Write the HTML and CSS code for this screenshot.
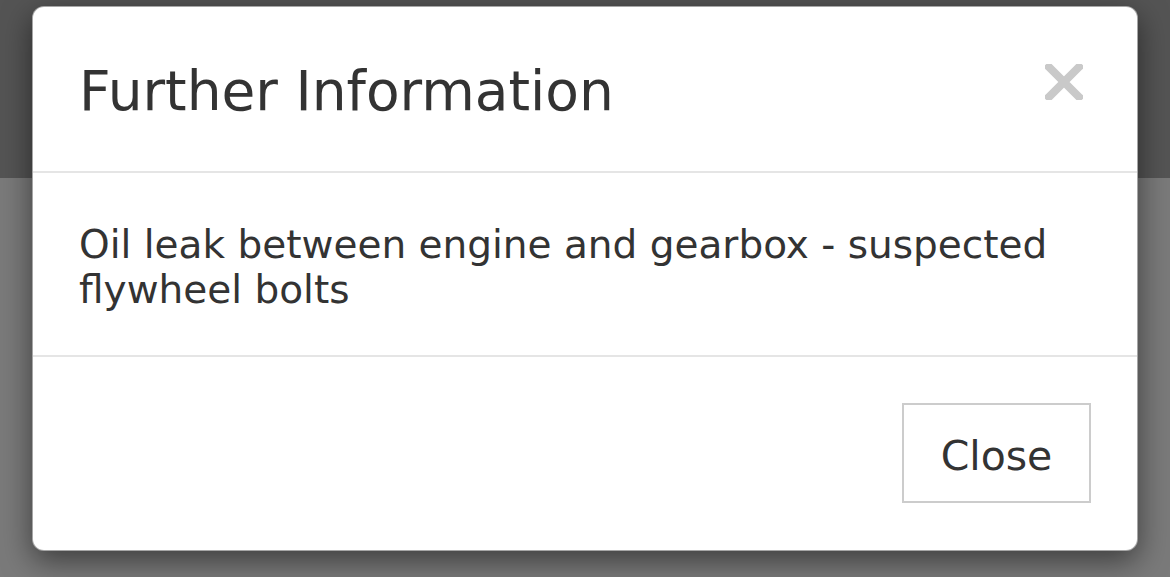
FILE: index.html
```html
<!DOCTYPE html>
<html>
<head>
<meta charset="utf-8">
<link rel="stylesheet" href="styles.css">
</head>
<body>
<div class="page">
  <div class="topbar"></div>
  <div class="rest"></div>
</div>
<div class="modal">
  <div class="modal-header">
    <h4 class="modal-title">Further Information</h4>
    <svg class="close-x" width="38" height="36" viewBox="0 0 38 36" aria-label="Close">
      <path d="M4 3 L34 33 M34 3 L4 33" stroke="#c9c9c9" stroke-width="8" stroke-linecap="square" fill="none"/>
    </svg>
  </div>
  <div class="modal-body">Oil leak between engine and gearbox - suspected flywheel bolts</div>
  <div class="modal-footer">
    <button class="btn">Close</button>
  </div>
</div>
</body>
</html>
```
FILE: styles.css
```css
html, body {
  margin: 0;
  padding: 0;
  height: 100%;
  overflow: hidden;
}
body {
  font-family: "DejaVu Sans", Verdana, sans-serif;
  color: #333;
  background: #7a7a7a;
}
.page {
  display: flex;
  flex-direction: column;
  height: 100%;
}
.topbar {
  height: 178px;
  background: #545454;
}
.rest {
  flex: 1;
  background: #7a7a7a;
}
.modal {
  position: absolute;
  left: 32px;
  top: 6px;
  width: 1104px;
  background: #fff;
  border: 1px solid rgba(0,0,0,0.35);
  border-radius: 12px;
  box-shadow: 0 10px 30px rgba(0,0,0,0.5);
  display: flex;
  flex-direction: column;
}
.modal-header {
  height: 166px;
  box-sizing: border-box;
  padding: 6px 54px 0 46px;
  display: flex;
  align-items: center;
  justify-content: space-between;
  border-bottom: 2px solid #e5e5e5;
}
.modal-title {
  margin: 0;
  font-size: 55px;
  font-weight: normal;
  line-height: 1.15;
}
.close-x {
  margin-bottom: 20px;
}
.modal-body {
  height: 184px;
  box-sizing: border-box;
  padding: 49px 46px 45px;
  font-size: 39px;
  line-height: 45px;
  border-bottom: 2px solid #e5e5e5;
}
.modal-footer {
  height: 193px;
  box-sizing: border-box;
  padding: 46px 46px;
  display: flex;
  justify-content: flex-end;
  align-items: flex-start;
}
.btn {
  width: 189px;
  height: 100px;
  background: #fff;
  border: 2px solid #ccc;
  border-radius: 0;
  font-family: "DejaVu Sans", Verdana, sans-serif;
  font-size: 41px;
  color: #333;
  padding: 5px 0 0;
}
```
